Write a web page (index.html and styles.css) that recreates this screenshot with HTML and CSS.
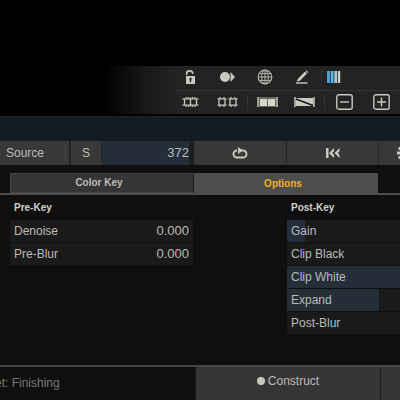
FILE: index.html
```html
<!DOCTYPE html>
<html lang="en">
<head>
<meta charset="utf-8">
<title>Color Key</title>
<link rel="stylesheet" href="styles.css">
</head>
<body>
<div class="app">
  <div class="viewer"></div>
  <div class="toolbar">
    <div class="tool-row">
      <button class="tool" aria-label="Unlock"><svg width="15" height="16" viewBox="0 0 15 16"><path d="M3.700 6V4.300C3.700 1 9.500 1 9.700 4.300V5" fill="none" stroke="#c9c9c0" stroke-width="1.600"/><path fill="#c9c9c0" fill-rule="evenodd" d="M3 7h9v8H3zM7.500 8.700a1.300 1.300 0 0 0-.7 2.300V13.200h1.400V11A1.300 1.300 0 0 0 7.500 8.700z"/></svg></button>
      <button class="tool" aria-label="Record next"><svg width="17" height="16" viewBox="0 0 17 16"><circle cx="6" cy="8" r="5" fill="#c9c9c0"/><path d="M11.500 3l4.500 5-4.500 5z" fill="#c9c9c0"/></svg></button>
      <button class="tool" aria-label="Globe"><svg width="17" height="16" viewBox="0 0 17 16" fill="none" stroke="#b4b4ac"><circle cx="9" cy="8" r="6.800" stroke-width="1.200"/><ellipse cx="9" cy="8" rx="3.300" ry="6.800"/><path d="M9 1v14M2 8h14M3.200 4.600h11.600M3.200 11.400h11.600"/></svg></button>
      <button class="tool" aria-label="Edit"><svg width="17" height="16" viewBox="0 0 17 16"><path d="M5 9.800L12 2.600l2 2L7 11.800l-3.300.8zM12.600 2l.8-.8 2 2-.8.800z" fill="#c9c9c0"/><path d="M3 14h11.500" stroke="#c9c9c0" stroke-width="1.400"/></svg></button>
      <span class="rule"></span>
      <button class="tool narrow" aria-label="Columns"><svg width="14" height="12" viewBox="0 0 14 12"><path fill="#46a0d2" d="M0 0h3.400v12H0z"/><path fill="#62b2da" d="M4 0h2.600v12H4z"/><path fill="#a9cbda" d="M7.400 0h2.600v12H7.400z"/><path fill="#d0d1ca" d="M10.800 0h2.400v12h-2.400z"/></svg></button>
    </div>
    <div class="tool-row second">
      <button class="tool" aria-label="Joined frames"><svg width="17" height="12" viewBox="0 0 17 12" fill="none" stroke="#c9c9c0" stroke-width="1.300"><rect x="2.500" y="2.800" width="12" height="6.400" rx="1"/><path d="M8.500 1.500v9M.5 2.800h2M.5 9.200h2M14.500 2.800h2M14.500 9.200h2M4 1v1.500M6.500 1v1.500M10.500 1v1.500M13 1v1.500M4 9.500V11M6.500 9.500V11M10.500 9.500V11M13 9.500V11"/></svg></button>
      <button class="tool" aria-label="Split frames"><svg width="21" height="12" viewBox="0 0 21 12" fill="none" stroke="#c9c9c0" stroke-width="1.300"><rect x="2" y="2.800" width="6" height="6.400" rx="1"/><rect x="13" y="2.800" width="6" height="6.400" rx="1"/><path d="M3 1v1.500M7 1v1.500M3 9.500V11M7 9.500V11M14 1v1.500M18 1v1.500M14 9.500V11M18 9.500V11M.5 2.800h1.500M.5 9.200h1.500M8 2.800h1.500M8 9.200h1.500M11.500 2.800H13M11.500 9.200H13M19 2.800h1.500M19 9.200h1.500"/></svg></button>
      <span class="rule"></span>
      <button class="tool" aria-label="Clip pair"><svg width="21" height="12" viewBox="0 0 21 12"><path d="M0 1h2v10H0zM19 1h2v10h-2z" fill="#a0a098"/><path d="M2 1h17v10H2z" fill="#66665f"/><path d="M3 3h7v7H3zM11 3h7v7h-7z" fill="#d6d6ca"/></svg></button>
      <button class="tool" aria-label="Dissolve"><svg width="21" height="12" viewBox="0 0 21 12"><path d="M0 1h2v10H0zM19 1h2v10h-2z" fill="#a0a098"/><path d="M2 2h17v8H2z" fill="#cbcbbf"/><path d="M2 3l17 6.500" stroke="#181818" stroke-width="1.600"/></svg></button>
      <span class="rule"></span>
      <button class="tool" aria-label="Zoom out"><svg width="17" height="16" viewBox="0 0 17 16" fill="none" stroke="#c9c9c0" stroke-width="1.400"><rect x=".8" y=".8" width="15.400" height="14.400" rx="2"/><path d="M4 8h9"/></svg></button>
      <button class="tool" aria-label="Zoom in"><svg width="17" height="16" viewBox="0 0 17 16" fill="none" stroke="#c9c9c0" stroke-width="1.400"><rect x=".8" y=".8" width="15.400" height="14.400" rx="2"/><path d="M4 8h9M8.500 3.500v9"/></svg></button>
    </div>
  </div>
  <div class="timeline"></div>
  <div class="transport">
    <button class="cell source">Source</button>
    <button class="cell">S</button>
    <div class="frame"><input type="text" value="372" aria-label="Frame"></div>
    <button class="cell" aria-label="Loop"><svg width="16" height="14" viewBox="0 0 16 14"><path d="M5 4.500a3.500 3.500 0 0 0 0 7h6a3.500 3.500 0 0 0 0-7H8" fill="none" stroke="#c9c9c0" stroke-width="1.900"/><path d="M6 1l5 3.500L6 8z" fill="#c9c9c0"/></svg></button>
    <button class="cell" aria-label="Go to start"><svg width="14" height="12" viewBox="0 0 14 12"><path d="M0 1h2.500v10H0z" fill="#c9c9c0"/><path d="M8 1v3.200L6.200 6 8 7.800V11L3 6zM13.500 1v3.200L11.700 6l1.800 1.800V11L8.500 6z" fill="#c9c9c0"/></svg></button>
    <button class="cell last" aria-label="Previous"><svg width="14" height="12" viewBox="0 0 14 12"><path d="M1.500 0h3v3h-3zM0 4.500h4v3H0zM1.500 9h3v3h-3z" fill="#c9c9c0"/></svg></button>
  </div>
  <div class="tabs" role="tablist">
    <button class="tab" role="tab">Color Key</button>
    <button class="tab active" role="tab" aria-selected="true">Options</button>
  </div>
  <main class="panel">
    <section class="group">
      <h2>Pre-Key</h2>
      <div class="param"><label for="denoise">Denoise</label><input id="denoise" type="text" value="0.000"></div>
      <div class="param"><label for="preblur">Pre-Blur</label><input id="preblur" type="text" value="0.000"></div>
    </section>
    <section class="group">
      <h2>Post-Key</h2>
      <button class="param gain">Gain</button>
      <button class="param">Clip Black</button>
      <button class="param full">Clip White</button>
      <button class="param expand">Expand</button>
      <button class="param">Post-Blur</button>
    </section>
  </main>
  <footer class="footer">
    <div class="status">et: Finishing</div>
    <button class="action"><span class="dot"></span>Construct</button>
    <button class="action" aria-label="More"></button>
  </footer>
</div>
</body>
</html>
```

FILE: styles.css
```css
* { box-sizing: border-box; }
body {
  margin: 0;
  background: #0f0f0f;
  color: #bcbcb8;
  font: 12px/16px "Liberation Sans", Arial, sans-serif;
}
button, input {
  margin: 0;
  padding: 0;
  border: 0;
  border-radius: 0;
  background: none;
  color: inherit;
  font: inherit;
}
.app {
  display: flex;
  flex-direction: column;
  min-height: 100vh;
  overflow: hidden;
}
.viewer { height: 66px; background: #000; }

.toolbar {
  padding-left: 172px;
  background: linear-gradient(to right, #000 104px, #181818 144px, #232323 180px);
  border-bottom: 2px solid #030303;
}
.tool-row { display: flex; align-items: center; height: 24px; }
.second { border-top: 1px solid #353535; margin-left: 4px; }
.second .tool:first-child { margin-left: -4px; }
.tool {
  flex: none;
  display: flex;
  align-items: center;
  justify-content: center;
  width: 37px;
  height: 100%;
  padding-bottom: 2px;
}
.narrow { width: 22px; }
.rule { flex: none; width: 1px; height: 16px; margin: 0 1px; background: #333; }

.timeline { height: 25px; background: #141b21; border-top: 1px solid #222527; }

.transport {
  display: grid;
  grid-template-columns: 71px 31px 92px 93px 92px 1fr;
  height: 24px;
  background: #383838;
}
.cell {
  display: flex;
  align-items: center;
  justify-content: center;
  border-right: 1px solid #252525;
}
.source { justify-content: flex-start; padding-left: 6px; border-right: 2px solid #232323; }
.source::after { content: ""; width: 1px; height: 16px; margin: 0 3px 0 auto; background: #4a4a4a; }
.last { justify-content: flex-start; padding-left: 18px; border: 0; }
.frame { display: flex; background: #242e38; border-right: 5px solid #1b1c1e; }
.frame input { width: 100%; font-size: 13px; text-align: right; }

.tabs {
  display: grid;
  grid-template-columns: 184px 184px 1fr;
  margin-top: 8px;
  padding-left: 10px;
  height: 22px;
  background: linear-gradient(#0f0f0f 20px, #4c4c4c 20px);
}
.tab {
  height: 20px;
  padding-right: 6px;
  background: #353535;
  border: 1px solid #444;
  border-right-color: #161616;
  font-weight: bold;
  font-size: 10px;
}
.active { height: 22px; background: #4d4d4d; border: 0; color: #efb01e; }

.panel {
  display: grid;
  grid-template-columns: 183px 1fr;
  column-gap: 94px;
  flex: 1;
  padding: 4px 0 0 10px;
}
h2 { margin: 0 0 4px; padding-left: 4px; font-size: 10px; line-height: 17px; color: #d0d0cc; }
.param {
  display: flex;
  align-items: center;
  width: 100%;
  height: 22px;
  margin-bottom: 1px;
  padding: 0 4px;
  background: #1a1a1a;
}
.param input { width: 50%; margin-left: auto; text-align: right; font-size: 13px; }
.gain { background: linear-gradient(to right, #232f3c 18px, #1a1a1a 18px); }
.full { background: #232e39; }
.expand { background: linear-gradient(to right, #232e39 92px, #1a1a1a 92px); }

.footer {
  display: grid;
  grid-template-columns: 195px 185px 1fr;
  height: 35px;
  border-top: 2px solid #484848;
}
.status { padding-top: 8px; margin-left: -5px; color: #777; }
.action {
  display: flex;
  justify-content: center;
  padding-top: 6px;
  background: #353535;
  border-left: 1px solid #1a1a1a;
}
.dot { width: 8px; height: 8px; margin: 4px 3px 0 0; border-radius: 50%; background: #c9c9c0; }
```
